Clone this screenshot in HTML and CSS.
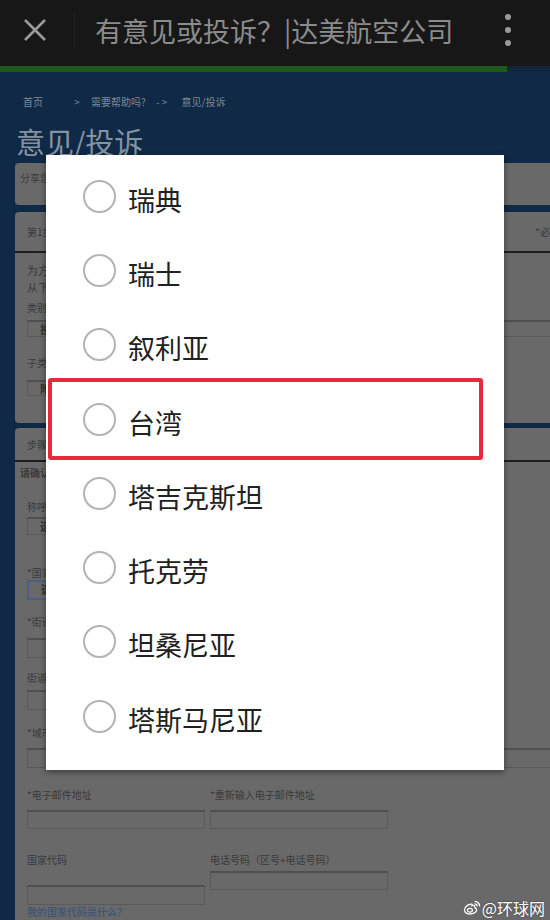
FILE: index.html
```html
<!DOCTYPE html>
<html lang="zh-CN">
<head>
  <meta charset="UTF-8">
  <meta name="viewport" content="width=device-width, initial-scale=1.0">
  <title>有意见或投诉？|达美航空公司</title>
  <link rel="stylesheet" href="styles.css">
</head>
<body>
  <div class="appbar">
    <svg class="close" width="24" height="24" viewBox="0 0 24 24">
      <path d="M2 2 L22 22 M22 2 L2 22" stroke="#9a9a9a" stroke-width="2.6" fill="none"/>
    </svg>
    <span class="divider"></span>
    <span class="appbar-title">有意见或投诉？|达美航空公司</span>
    <span class="menu"><i></i><i></i><i></i></span>
  </div>
  <div class="progress"><div class="progress-fill"></div></div>

  <div class="page">
    <div class="breadcrumb">
      <span>首页</span>
      <span class="sep">&gt;</span>
      <span>需要帮助吗?</span>
      <span class="sep2">- &gt;</span>
      <span>意见/投诉</span>
    </div>
    <h1 class="page-title">意见/投诉</h1>

    <div class="panel panel-share">分享您的意见</div>

    <div class="panel panel-step1">
      <div class="panel-head">
        <span>第1步：选择</span>
        <span class="required">*必须</span>
      </div>
      <div class="panel-body">
        <p class="intro">为方便我们<br>从下拉菜单</p>
        <div class="label lbl-cat">类别</div>
        <div class="select select-cat">投诉</div>
        <div class="label lbl-sub">子类别</div>
        <div class="select select-sub">附加</div>
      </div>
    </div>

    <div class="panel panel-step2">
      <div class="panel-head head-short">
        <span>步骤2：联系信息</span>
      </div>
      <div class="panel-body">
        <p class="notice">请确认联系信息</p>
        <div class="label l1">称呼</div>
        <div class="select s1">选择</div>
        <div class="label l2">*国家/地区</div>
        <div class="select s2">选择</div>
        <div class="label l3">*街道地址</div>
        <div class="input i3"></div>
        <div class="label l4">街道地址2</div>
        <div class="input i4"></div>
        <div class="label l5">*城市</div>
        <div class="input i5"></div>

        <div class="row row-email">
          <div>
            <div class="label">*电子邮件地址</div>
            <div class="input in-email"></div>
          </div>
          <div>
            <div class="label">*重新输入电子邮件地址</div>
            <div class="input in-email"></div>
          </div>
        </div>

        <div class="row row-phone">
          <div>
            <div class="label">国家代码</div>
            <div class="input in-code"></div>
            <a class="help-link">我的国家代码是什么？</a>
          </div>
          <div>
            <div class="label">电话号码（区号+电话号码）</div>
            <div class="input in-phone"></div>
          </div>
        </div>
      </div>
    </div>
  </div>

  <div class="dialog">
    <div class="option"><span class="radio"></span><span class="option-text">瑞典</span></div>
    <div class="option"><span class="radio"></span><span class="option-text">瑞士</span></div>
    <div class="option"><span class="radio"></span><span class="option-text">叙利亚</span></div>
    <div class="option"><span class="radio"></span><span class="option-text">台湾</span></div>
    <div class="option"><span class="radio"></span><span class="option-text">塔吉克斯坦</span></div>
    <div class="option"><span class="radio"></span><span class="option-text">托克劳</span></div>
    <div class="option"><span class="radio"></span><span class="option-text">坦桑尼亚</span></div>
    <div class="option"><span class="radio"></span><span class="option-text">塔斯马尼亚</span></div>
    <div class="highlight"></div>
  </div>

  <div class="watermark">
    <svg width="18" height="16" viewBox="0 0 18 16">
      <path d="M7.5 4.2 C3.6 5.2 1 8 1.5 10.6 C2 13.6 6 14.6 9.5 13.6 C13 12.6 14.6 10.2 13.1 8.6 C12.4 7.9 11.5 8.1 11.8 7.1 C12.2 5.6 11 4.9 9 5.6 C9.5 4.2 8.8 3.8 7.5 4.2 Z" fill="none" stroke="#fff" stroke-width="1.3"/>
      <ellipse cx="6.9" cy="10.3" rx="2.5" ry="1.9" fill="none" stroke="#fff" stroke-width="1.2"/>
      <path d="M11.6 1.4 A4.8 4.8 0 0 1 16.6 6.4" stroke="#fff" fill="none" stroke-width="1.4"/>
      <path d="M11.6 3.9 A2.3 2.3 0 0 1 14.1 6.3" stroke="#fff" fill="none" stroke-width="1.3"/>
    </svg>
    <span>@环球网</span>
  </div>
</body>
</html>
```

FILE: styles.css
```css
/* General Styles */
body {
  margin: 0;
  width: 550px;
  height: 920px;
  overflow: hidden;
  position: relative;
  font-family: "Noto Sans CJK SC", "Noto Sans", sans-serif;
  background-color: #0f2946;
}

/* App bar */
.appbar {
  height: 66px;
  background-color: #171717;
  display: flex;
  align-items: center;
}

.close {
  margin-left: 23px;
  margin-top: -6px;
}

.divider {
  width: 1px;
  height: 36px;
  margin-left: 27px;
  margin-top: -6px;
  background-color: #222;
}

.appbar-title {
  margin-left: 20px;
  margin-top: -6px;
  font-size: 27px;
  color: #8c8c8c;
  white-space: nowrap;
}

.menu {
  margin-left: auto;
  margin-right: 39px;
  margin-top: -6px;
  display: flex;
  flex-direction: column;
  gap: 7px;
}

.menu i {
  width: 6px;
  height: 6px;
  border-radius: 50%;
  background-color: #9a9a9a;
}

.progress {
  height: 6px;
  background-color: #10263d;
}

.progress-fill {
  width: 507px;
  height: 100%;
  background-color: #1d5a1d;
}

/* Page behind the dialog (dimmed) */
.page {
  padding-left: 15px;
  height: 848px;
  overflow: hidden;
}

.breadcrumb {
  padding: 23px 0 0 8px;
  font-size: 10px;
  line-height: 14px;
  color: #7d8a99;
  white-space: nowrap;
}

.breadcrumb .sep {
  margin: 0 9px 0 29px;
}

.breadcrumb .sep2 {
  margin: 0 12px 0 8px;
}

.page-title {
  margin: 15px 0 0 1px;
  font-size: 29px;
  line-height: 34px;
  font-weight: normal;
  color: #8593a0;
}

.panel {
  width: 600px;
  background-color: #696969;
  border-radius: 4px;
  color: #3a3a3a;
  font-size: 10px;
}

.panel-share {
  margin-top: 5px;
  height: 42px;
  padding: 8px 5px 0;
  box-sizing: border-box;
  line-height: 14px;
}

.panel-step1 {
  margin-top: 7px;
  height: 211px;
}

.panel-step2 {
  margin-top: 5px;
  height: 600px;
}

.panel-head {
  height: 39px;
  padding: 0 55px 0 12px;
  display: flex;
  align-items: center;
  justify-content: space-between;
  border-bottom: 2px solid #1e1e1e;
}

.panel-head.head-short {
  height: 32px;
}

.required {
  font-size: 10px;
}

.panel-body {
  padding-left: 12px;
}

.intro {
  margin: 0;
  padding-top: 9px;
  font-size: 11px;
  line-height: 17px;
}

.label {
  font-size: 10px;
  line-height: 14px;
  white-space: nowrap;
}

.select,
.input {
  box-sizing: border-box;
  border: 1px solid #5a5a5a;
  border-top: 2px solid #4f4f4f;
  font-size: 11px;
  font-weight: bold;
  line-height: 14px;
  padding-left: 12px;
  color: #333;
}

.lbl-cat { margin-top: 5px; }
.select-cat { margin-top: 5px; height: 17px; width: 560px; }
.lbl-sub { margin-top: 19px; }
.select-sub { margin-top: 10px; height: 16px; width: 180px; line-height: 12px; }

.notice {
  margin: 0 0 0 -7px;
  padding-top: 4px;
  font-size: 10px;
  line-height: 14px;
  font-weight: bold;
}

.l1 { margin-top: 20px; }
.s1 { margin-top: 3px; height: 18px; width: 180px; }
.l2 { margin-top: 31px; }
.s2 { margin-top: 0; height: 20px; width: 180px; border: 2px solid #4b5f86; }
.l3 { margin-top: 15px; }
.i3 { margin-top: 9px; height: 20px; width: 180px; }
.l4 { margin-top: 13px; }
.i4 { margin-top: 5px; height: 20px; width: 180px; }
.l5 { margin-top: 16px; }
.i5 { margin-top: 8px; height: 20px; width: 560px; }

.row {
  display: grid;
  grid-template-columns: 178px 178px;
  column-gap: 5px;
  align-items: start;
}

.row-email { margin-top: 20px; }
.in-email { margin-top: 8px; height: 19px; }

.row-phone { margin-top: 24px; }
.in-code { margin-top: 18px; height: 20px; }
.in-phone { margin-top: 4px; height: 19px; }

.help-link {
  display: block;
  font-size: 10px;
  line-height: 14px;
  color: #34507a;
}

/* Country picker dialog */
.dialog {
  position: absolute;
  top: 155px;
  left: 46px;
  width: 458px;
  height: 615px;
  padding-top: 4px;
  box-sizing: border-box;
  background-color: #fff;
  box-shadow: 0 2px 6px rgba(0, 0, 0, 0.45);
}

.option {
  height: 74.3px;
  display: flex;
  align-items: center;
  padding-left: 37px;
}

.radio {
  width: 33px;
  height: 33px;
  box-sizing: border-box;
  border: 2px solid #b3b3b3;
  border-radius: 50%;
  flex-shrink: 0;
}

.option-text {
  margin-left: 12px;
  margin-top: 6px;
  font-size: 27px;
  color: #212121;
}

.highlight {
  position: absolute;
  top: 223px;
  left: 2px;
  width: 435px;
  height: 82px;
  box-sizing: border-box;
  border: 4px solid #e8283c;
  border-radius: 3px;
}

.watermark {
  position: absolute;
  right: 5px;
  bottom: 0;
  height: 24px;
  display: flex;
  align-items: center;
  gap: 1px;
  font-size: 16px;
  color: #fff;
  text-shadow: 0 0 2px rgba(0, 0, 0, 0.5);
}
```
